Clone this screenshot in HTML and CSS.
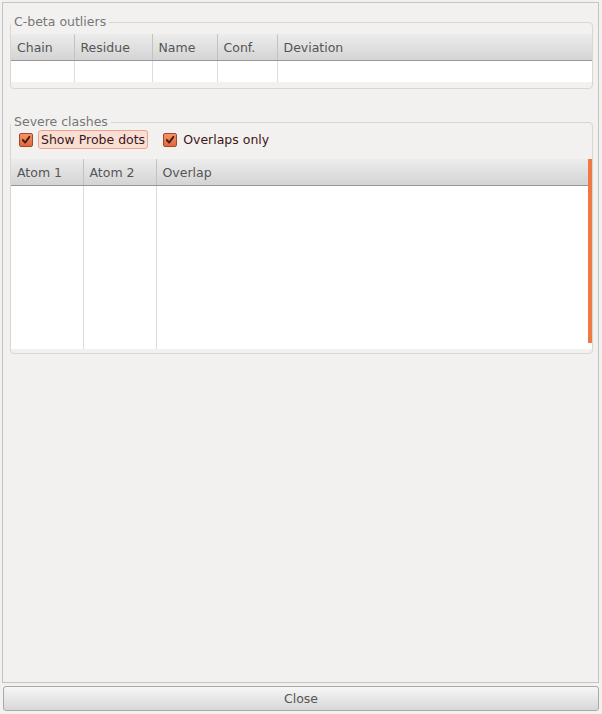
FILE: index.html
```html
<!DOCTYPE html>
<html lang="en">
<head>
  <meta charset="UTF-8" />
  <title>Validation</title>
  <link rel="stylesheet" href="styles.css">
</head>
<body>

<div class="dialog">
  <!-- C-beta outliers -->
  <fieldset class="group group-cbeta">
    <legend>C-beta outliers</legend>
    <table class="grid">
      <colgroup>
        <col class="c-chain"><col class="c-residue"><col class="c-name"><col class="c-conf"><col>
      </colgroup>
      <thead>
        <tr><th>Chain</th><th>Residue</th><th>Name</th><th>Conf.</th><th>Deviation</th></tr>
      </thead>
      <tbody>
        <tr class="row-cbeta"><td></td><td></td><td></td><td></td><td></td></tr>
      </tbody>
    </table>
  </fieldset>

  <!-- Severe clashes -->
  <fieldset class="group group-clash">
    <legend>Severe clashes</legend>
    <div class="options">
      <label class="check focused">
        <span class="box"><svg width="14" height="14" viewBox="0 0 14 14"><path d="M3.3 7 L6 10 L11 3.3" fill="none" stroke="#4a1e12" stroke-width="2.2" stroke-linecap="round" stroke-linejoin="round"/></svg></span>
        <span class="text">Show Probe dots</span>
      </label>
      <label class="check">
        <span class="box"><svg width="14" height="14" viewBox="0 0 14 14"><path d="M3.3 7 L6 10 L11 3.3" fill="none" stroke="#4a1e12" stroke-width="2.2" stroke-linecap="round" stroke-linejoin="round"/></svg></span>
        <span class="text">Overlaps only</span>
      </label>
    </div>
    <div class="scroll">
      <table class="grid">
        <colgroup>
          <col class="c-atom"><col class="c-atom2"><col>
        </colgroup>
        <thead>
          <tr><th>Atom 1</th><th>Atom 2</th><th>Overlap</th></tr>
        </thead>
        <tbody>
          <tr class="row-clash"><td></td><td></td><td></td></tr>
        </tbody>
      </table>
      <div class="scroll-bar"></div>
    </div>
  </fieldset>
</div>

<button class="close-btn">Close</button>

</body>
</html>
```

FILE: styles.css
```css
* { box-sizing: border-box; }
body {
  margin: 0;
  background-color: #f2f1f0;
  font-family: 'DejaVu Sans', 'Noto Sans', sans-serif;
  font-size: 12.5px;
  color: #3c3c3c;
}
.dialog {
  margin: 2px 3px 0 2px;
  height: 681px;
  border: 1px solid #c6c4c0;
  padding: 12px 5px 0 7px;
}
.group {
  margin: 0;
  padding: 0;
  border: 1px solid #d8d6d2;
  border-radius: 4px;
  min-width: 0;
}
.group legend {
  padding: 0 3px;
  line-height: 14px;
  color: #777;
}
.group-cbeta {
  padding: 5px 0 6px 0;
}
.group-clash {
  margin-top: 26px;
  padding: 1px 0 4px 0;
}

/* tables */
.grid {
  width: 100%;
  table-layout: fixed;
  border-collapse: collapse;
  background-color: #fff;
}
.grid th {
  height: 26px;
  padding: 2px 6px 0 6px;
  text-align: left;
  font-weight: normal;
  color: #555;
  background: linear-gradient(#ececec, #d4d4d4);
  border-left: 1px solid #c2c2c2;
  border-bottom: 1px solid #979797;
}
.grid td {
  padding: 0;
  border-left: 1px solid #dcdcdc;
}
.grid th:first-child,
.grid td:first-child {
  border-left: none;
}
.c-chain { width: 63px; }
.c-residue { width: 78px; }
.c-name { width: 65px; }
.c-conf { width: 60px; }
.c-atom { width: 72px; }
.c-atom2 { width: 73px; }
.row-cbeta td { height: 22px; }
.row-clash td { height: 164px; }

/* check boxes */
.options {
  display: flex;
  align-items: center;
  height: 19px;
  padding-left: 8px;
  margin-bottom: 10px;
}
.check {
  display: flex;
  align-items: center;
  margin-right: 15px;
}
.box {
  width: 14px;
  height: 14px;
  border: 1px solid #a24a28;
  border-radius: 2px;
  background: linear-gradient(#f4946a, #e2683c);
  display: flex;
  align-items: center;
  justify-content: center;
}
.box svg { display: block; }
.check .text {
  color: #3e1616;
  margin-left: 6px;
  line-height: 17px;
}
.check.focused .text {
  margin-left: 5px;
  padding: 0 2px;
  background-color: #f7dfd5;
  border: 1px solid #f2a282;
  border-radius: 3px;
}

.scroll {
  position: relative;
}
.scroll-bar {
  position: absolute;
  right: 0;
  top: 0;
  width: 4px;
  height: 184px;
  background-color: #f07846;
}

.close-btn {
  display: block;
  margin: 3px 0 0 3px;
  width: 596px;
  height: 25px;
  border: 1px solid #a9a9a9;
  border-radius: 3px;
  background: linear-gradient(#f6f6f6, #d8d8d8);
  font-family: 'DejaVu Sans', 'Noto Sans', sans-serif;
  font-size: 12.5px;
  color: #555;
  padding: 0;
}
```
